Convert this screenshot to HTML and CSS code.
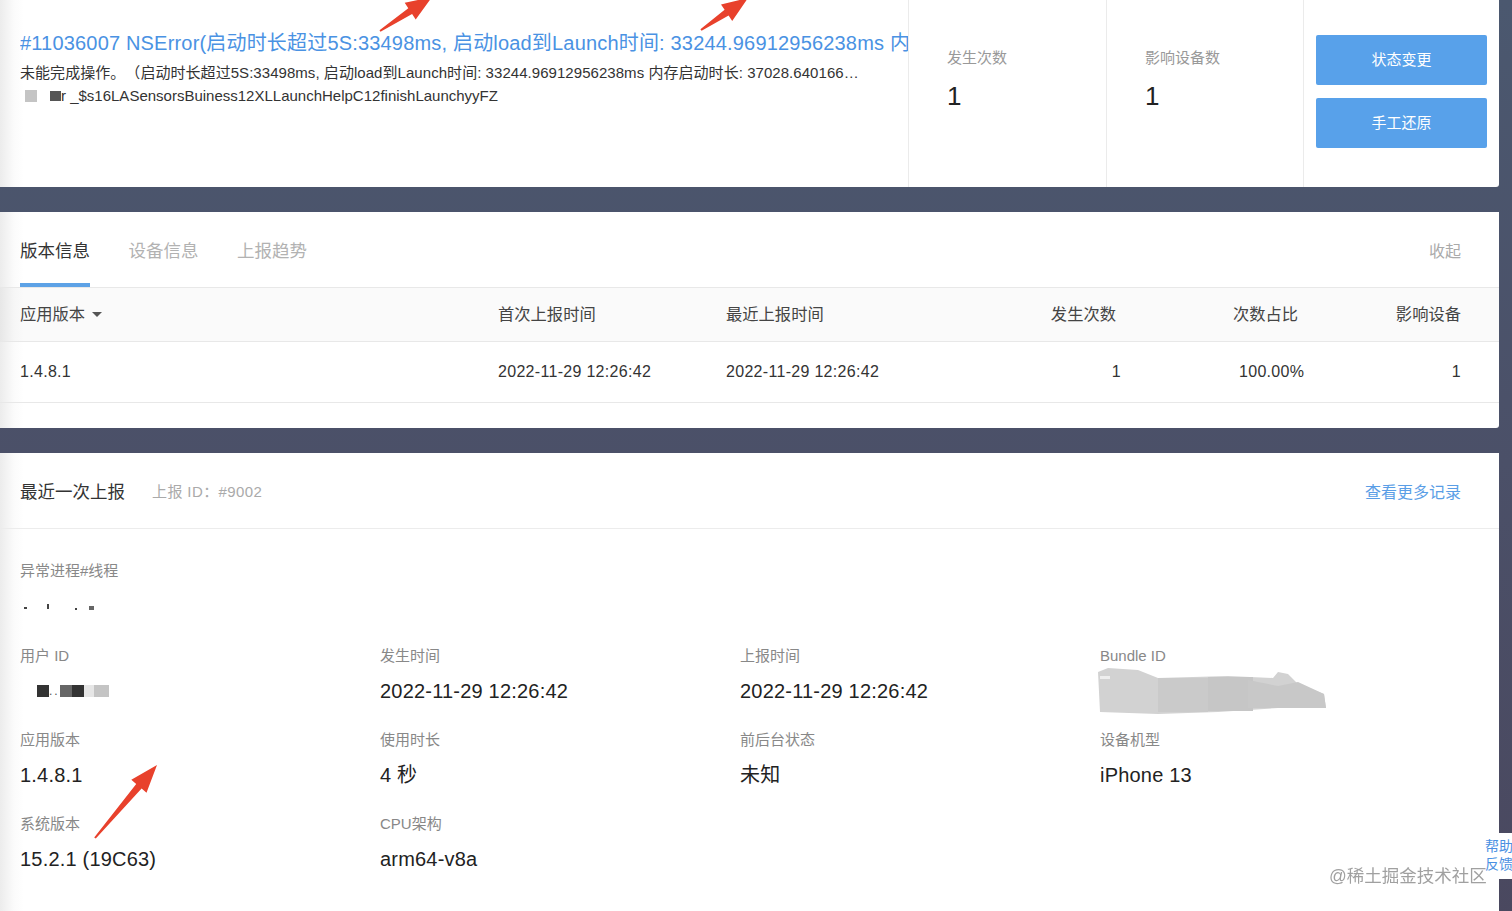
FILE: index.html
```html
<!DOCTYPE html>
<html lang="zh-CN">
<head>
<meta charset="utf-8">
<title>NSError 详情</title>
<link rel="stylesheet" href="styles.css">
</head>
<body>
<div class="page">
  <section class="card issue">
    <div class="issue-main">
      <h1 class="issue-title">#11036007 NSError(启动时长超过5S:33498ms, 启动load到Launch时间: 33244.96912956238ms 内存启动时长: 37028.640166ms)</h1>
      <p class="issue-desc">未能完成操作。（启动时长超过5S:33498ms, 启动load到Launch时间: 33244.96912956238ms 内存启动时长: 37028.640166…</p>
      <p class="issue-stack"><span class="blk blk-light"></span><span class="blk blk-dark"></span>r _$s16LASensorsBuiness12XLLaunchHelpC12finishLaunchyyFZ</p>
    </div>
    <div class="stat">
      <div class="stat-label">发生次数</div>
      <div class="stat-value">1</div>
    </div>
    <div class="stat">
      <div class="stat-label">影响设备数</div>
      <div class="stat-value">1</div>
    </div>
    <div class="actions">
      <button class="btn">状态变更</button>
      <button class="btn">手工还原</button>
    </div>
  </section>

  <section class="card versions">
    <div class="tabs">
      <div class="tab tab-active">版本信息</div>
      <div class="tab">设备信息</div>
      <div class="tab">上报趋势</div>
      <div class="tab-collapse">收起</div>
    </div>
    <div class="trow thead">
      <div class="c1">应用版本 <span class="caret"></span></div>
      <div class="c2">首次上报时间</div>
      <div class="c3">最近上报时间</div>
      <div class="c4 head-r">发生次数</div>
      <div class="c5">次数占比</div>
      <div class="c6">影响设备</div>
    </div>
    <div class="trow tbody">
      <div class="c1">1.4.8.1</div>
      <div class="c2">2022-11-29 12:26:42</div>
      <div class="c3">2022-11-29 12:26:42</div>
      <div class="c4">1</div>
      <div class="c5 pct">100.00%</div>
      <div class="c6">1</div>
    </div>
  </section>

  <section class="card latest">
    <div class="latest-head">
      <span class="latest-title">最近一次上报</span>
      <span class="latest-id">上报 ID：#9002</span>
      <a class="latest-more">查看更多记录</a>
    </div>
    <div class="latest-body">
      <div class="field field-wide">
        <div class="f-label">异常进程#线程</div>
        <div class="f-value f-faint"><span class="speck s1"></span><span class="speck s2"></span><span class="speck s3"></span><span class="speck s4"></span></div>
      </div>
      <div class="grid">
        <div class="field">
          <div class="f-label">用户 ID</div>
          <div class="f-value f-redact">
            <span class="r r-dark"></span><span class="r-dots">..</span><span class="r r-mid"></span><span class="r r-dark"></span><span class="r r-pale"></span><span class="r r-grey"></span>
          </div>
        </div>
        <div class="field">
          <div class="f-label">发生时间</div>
          <div class="f-value">2022-11-29 12:26:42</div>
        </div>
        <div class="field">
          <div class="f-label">上报时间</div>
          <div class="f-value">2022-11-29 12:26:42</div>
        </div>
        <div class="field">
          <div class="f-label">Bundle ID</div>
          <div class="f-value f-smear">
            <svg width="230" height="46" viewBox="0 0 230 46">
              <polygon points="0,4 10,0 40,2 60,10 130,8 175,10 180,4 190,6 200,16 226,26 228,40 180,40 120,44 60,46 2,44" fill="#d2d2d2"/>
              <rect x="60" y="10" width="50" height="34" fill="#cacaca"/>
              <rect x="110" y="9" width="45" height="34" fill="#c6c6c6"/>
              <polygon points="150,12 180,18 200,14 226,26 228,40 150,40" fill="#c8c8c8"/>
              <rect x="2" y="8" width="10" height="3" fill="#eeeeee"/>
            </svg>
          </div>
        </div>
        <div class="field">
          <div class="f-label">应用版本</div>
          <div class="f-value">1.4.8.1</div>
        </div>
        <div class="field">
          <div class="f-label">使用时长</div>
          <div class="f-value">4 秒</div>
        </div>
        <div class="field">
          <div class="f-label">前后台状态</div>
          <div class="f-value">未知</div>
        </div>
        <div class="field">
          <div class="f-label">设备机型</div>
          <div class="f-value">iPhone 13</div>
        </div>
        <div class="field">
          <div class="f-label">系统版本</div>
          <div class="f-value">15.2.1 (19C63)</div>
        </div>
        <div class="field">
          <div class="f-label">CPU架构</div>
          <div class="f-value">arm64-v8a</div>
        </div>
      </div>
    </div>
  </section>
</div>

<div class="help-tab">帮助<br>反馈</div>
<div class="watermark">@稀土掘金技术社区</div>

<svg class="marks" width="1512" height="911" viewBox="0 0 1512 911">
  <polygon fill="#e8412c" points="379.5,30.2 408.3,8.3 404.7,2.8 432,-3 415.7,19.6 412.1,14.1 380.5,31.8"/>
  <polygon fill="#e8412c" points="700.4,29.2 724.6,9.7 721.0,4.4 748,-2 732.2,20.9 728.6,15.5 701.6,30.8"/>
  <polygon fill="#e8412c" points="94.2,837.4 136.2,784.0 131.3,779.8 157,765 146.5,792.8 141.6,788.6 95.8,838.6"/>
</svg>
</body>
</html>
```

FILE: styles.css
```css
* { box-sizing: border-box; }

html, body {
  margin: 0;
  padding: 0;
}

body {
  width: 1512px;
  min-height: 911px;
  overflow: hidden;
  background: linear-gradient(180deg, #4b586f 0%, #4b5068 50%, #4a485f 100%);
  font-family: "Liberation Sans", "Noto Sans CJK SC", sans-serif;
  color: #333;
  text-spacing-trim: space-all;
}

.page {
  width: 1499px;
  display: flex;
  flex-direction: column;
  gap: 25px;
}

.card {
  background: linear-gradient(90deg, #ececec 0px, #fbfbfb 14px, #fff 24px);
  border-radius: 0 0 3px 0;
}

/* ---------- issue card ---------- */
.issue {
  height: 187px;
  display: flex;
}

.issue-main {
  flex: 0 0 908px;
  padding: 29px 0 0 20px;
  overflow: hidden;
}

.issue-title {
  margin: 0;
  font-size: 20px;
  line-height: 28px;
  font-weight: normal;
  letter-spacing: 0.18px;
  color: #4a92e3;
  white-space: nowrap;
  overflow: hidden;
}

.issue-desc {
  margin: 6px 0 0;
  font-size: 15px;
  line-height: 20px;
  letter-spacing: 0.05px;
  color: #333;
  white-space: nowrap;
}

.issue-stack {
  margin: 3px 0 0;
  font-size: 15px;
  line-height: 20px;
  color: #333;
  display: flex;
  align-items: center;
  white-space: nowrap;
}

.blk {
  display: inline-block;
  width: 12px;
  height: 12px;
}

.blk-light {
  background: #c4c4c4;
  margin-left: 5px;
  margin-right: 13px;
}

.blk-dark {
  background: #555;
  width: 11px;
  height: 10px;
}

.stat {
  flex: 0 0 198px;
  border-left: 1px solid #ebebeb;
  padding: 48px 0 0 38px;
}

.stat + .stat { flex-basis: 197px; }

.stat-label {
  font-size: 15px;
  line-height: 20px;
  color: #999;
}

.stat-value {
  margin-top: 12px;
  font-size: 26px;
  line-height: 32px;
  color: #222;
}

.actions {
  flex: 1;
  border-left: 1px solid #ebebeb;
  padding: 35px 12px 0 12px;
  display: flex;
  flex-direction: column;
  gap: 13px;
}

.btn {
  width: 171px;
  height: 50px;
  border: none;
  border-radius: 2px;
  background: #58a1ea;
  color: #fff;
  font-family: "Liberation Sans", "Noto Sans CJK SC", sans-serif;
  font-size: 15px;
  padding: 0 0 4px;
}

/* ---------- versions card ---------- */
.versions {
  height: 216px;
}

.tabs {
  height: 76px;
  display: flex;
  align-items: stretch;
  gap: 38.5px;
  padding: 0 38px 0 20px;
  border-bottom: 1px solid #e8e8e8;
}

.tab {
  display: flex;
  align-items: center;
  font-size: 17.5px;
  color: #b2b2b2;
  padding-bottom: 1px;
}

.tab-active {
  color: #333;
  box-shadow: inset 0 -4px 0 #5da2e6;
}

.tab-collapse {
  margin-left: auto;
  display: flex;
  align-items: center;
  font-size: 16px;
  color: #aaa;
}

.trow {
  display: grid;
  grid-template-columns: 478px 228px 274px 121px 219px 121px;
  padding: 0 38px 0 20px;
  align-items: center;
  border-bottom: 1px solid #e8e8e8;
}

.thead {
  height: 54px;
  padding-bottom: 3px;
  background: rgba(0, 0, 0, 0.018);
  font-size: 16.3px;
  color: #444;
}

.tbody {
  height: 61px;
  font-size: 16px;
  color: #333;
  letter-spacing: 0.3px;
}

.c4, .c6 { text-align: right; }
.head-r { padding-right: 5px; }
.c5 { padding-left: 112px; }
.pct { padding-left: 118px; }

.caret {
  display: inline-block;
  width: 0;
  height: 0;
  border-left: 5px solid transparent;
  border-right: 5px solid transparent;
  border-top: 5px solid #555;
  vertical-align: middle;
  margin-left: 2px;
  margin-top: -3px;
}

/* ---------- latest card ---------- */
.latest {
  flex: 1;
  min-height: 470px;
}

.latest-head {
  height: 76px;
  display: flex;
  align-items: center;
  padding: 0 38px 0 20px;
  border-bottom: 1px solid #ececec;
}

.latest-title {
  font-size: 17.5px;
  color: #333;
}

.latest-id {
  margin-left: 27px;
  font-size: 15px;
  letter-spacing: 0.4px;
  color: #aaa;
}

.latest-more {
  margin-left: auto;
  font-size: 16px;
  color: #5a9ee6;
}

.latest-body {
  padding: 32px 20px 0 20px;
}

.grid {
  display: grid;
  grid-template-columns: repeat(4, 360px);
  row-gap: 25px;
  margin-top: 26px;
}

.f-label {
  font-size: 15px;
  line-height: 20px;
  color: #888;
}

.f-value {
  margin-top: 11px;
  font-size: 20px;
  line-height: 28px;
  height: 28px;
  color: #222;
  letter-spacing: 0.2px;
}

.f-faint {
  display: flex;
  align-items: center;
}

.speck {
  display: inline-block;
  height: 2px;
  background: #444;
}
.s1 { width: 3px; margin-left: 4px; margin-top: 4px; }
.s2 { width: 2px; height: 5px; margin-left: 20px; }
.s3 { width: 2px; margin-left: 26px; margin-top: 6px; }
.s4 { width: 5px; height: 4px; margin-left: 12px; margin-top: 4px; background: #666; }

.f-redact {
  display: flex;
  align-items: center;
  padding-left: 17px;
}

.r {
  display: inline-block;
  height: 12px;
}
.r-dark { width: 12px; background: #333; }
.r-mid { width: 12px; background: #666; }
.r-pale { width: 10px; background: #e6e6e6; }
.r-grey { width: 15px; background: #c4c4c4; }
.r-dots {
  font-size: 12px;
  line-height: 12px;
  color: #555;
  letter-spacing: 2px;
}

.f-smear {
  margin-left: -2px;
  overflow: visible;
}
.f-smear svg {
  display: block;
  margin-top: -9px;
}

/* ---------- overlays ---------- */
.help-tab {
  position: fixed;
  left: 1484px;
  top: 833px;
  width: 40px;
  height: 46px;
  background: #fff;
  border-radius: 3px 0 0 3px;
  padding: 4px 0 0 1px;
  font-size: 14px;
  line-height: 18px;
  color: #4a90e2;
}

.watermark {
  position: fixed;
  left: 1329px;
  top: 864px;
  font-size: 17.5px;
  line-height: 24px;
  color: rgba(120, 120, 120, 0.7);
  white-space: nowrap;
}

.marks {
  position: absolute;
  left: 0;
  top: 0;
  pointer-events: none;
}
```
